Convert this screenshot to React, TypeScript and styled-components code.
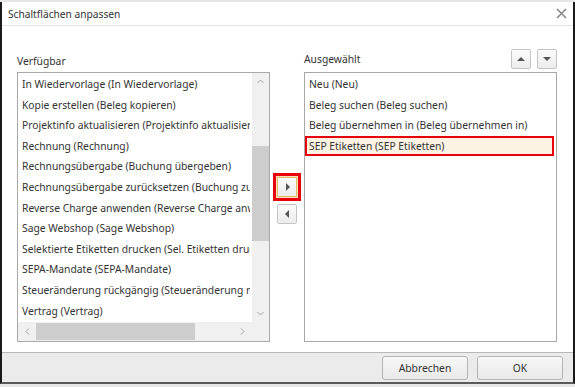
import styled, { createGlobalStyle } from "styled-components";

const GlobalStyle = createGlobalStyle`
  html, body {
    margin: 0;
    padding: 0;
    background: #e6e6e6;
    font-family: "Noto Sans", "Open Sans", sans-serif;
  }
`;

const Dialog = styled.div`
  margin-top: 2px;
  width: 575px;
  height: 382px;
  box-sizing: border-box;
  border-left: 2px solid #1a1a1a;
  border-right: 2px solid #1a1a1a;
  border-bottom: 2px solid #5a5a5a;
  background: #fff;
  display: flex;
  flex-direction: column;
`;

const Header = styled.div`
  height: 23px;
  display: flex;
  align-items: center;
  justify-content: space-between;
  padding: 0 6px 0 6px;
  border-bottom: 1px solid #e4e4e4;
  font-size: 10.2px;
  color: #333;
`;

const CloseIcon = styled.svg`
  width: 11px;
  height: 11px;
`;

const Body = styled.div`
  flex: 1;
  display: flex;
  padding: 19px 15px 0 15px;
`;

const Column = styled.div`
  width: 253px;
  display: flex;
  flex-direction: column;
`;

const ColumnHead = styled.div<{ $bottom?: boolean }>`
  height: 27px;
  display: flex;
  align-items: ${(p) => (p.$bottom ? "flex-end" : "center")};
  justify-content: space-between;
  padding-bottom: ${(p) => (p.$bottom ? "4px" : "0")};
  box-sizing: border-box;
  font-size: 10.3px;
  color: #333;
`;

const SortGroup = styled.div`
  display: flex;
  gap: 6px;
`;

const SmallButton = styled.button`
  width: 20px;
  height: 20px;
  padding: 0;
  display: flex;
  align-items: center;
  justify-content: center;
  border: 1px solid #c4c4c4;
  border-radius: 2px;
  background: linear-gradient(#fbfbfb, #ececec);
`;

const ListBox = styled.div`
  width: 100%;
  height: 270px;
  box-sizing: border-box;
  border: 1px solid #a9a9a9;
  position: relative;
  overflow: hidden;
  background: #fff;
`;

const Rows = styled.div`
  padding-top: 1px;
`;

const Row = styled.div<{ $selected?: boolean }>`
  height: 20.6px;
  line-height: 20.6px;
  padding-left: 4px;
  margin-right: 19px;
  white-space: nowrap;
  overflow: hidden;
  text-overflow: clip;
  font-size: 10.3px;
  color: #333;
  box-sizing: border-box;
  ${(p) =>
    p.$selected &&
    `
    background: #fdf3e5;
    border: 2px solid #e8000b;
    line-height: 17px;
    padding-left: 2px;
    margin-right: 2px;
  `}
`;

const VScroll = styled.div`
  position: absolute;
  top: 0;
  right: 0;
  width: 17px;
  bottom: 19px;
  background: #f0f0f0;
`;

const VThumb = styled.div`
  position: absolute;
  left: 0;
  right: 0;
  top: 73px;
  height: 95px;
  background: #cdcdcd;
`;

const HScroll = styled.div`
  position: absolute;
  left: 0;
  right: 0;
  bottom: 0;
  height: 19px;
  background: #f0f0f0;
`;

const HThumb = styled.div`
  position: absolute;
  top: 1px;
  bottom: 1px;
  left: 18px;
  width: 159px;
  background: #cdcdcd;
`;

const Arrow = styled.svg<{ $pos: string }>`
  position: absolute;
  ${(p) => p.$pos}
`;

const Middle = styled.div`
  width: 34px;
  display: flex;
  flex-direction: column;
  align-items: center;
  padding-top: 132px;
  gap: 7px;
`;

const MoveButton = styled.button<{ $marked?: boolean }>`
  width: 20px;
  height: 20px;
  padding: 0;
  display: flex;
  align-items: center;
  justify-content: center;
  border: 1px solid #c4c4c4;
  border-radius: 2px;
  background: linear-gradient(#fbfbfb, #ececec);
  ${(p) =>
    p.$marked &&
    `
    border-color: #e2b766;
    border-radius: 0;
    box-shadow: 0 0 0 1px #f6e3b8, 0 0 0 4px #e8000b;
  `}
`;

const Footer = styled.div`
  height: 29px;
  border-top: 1px solid #b8b8b8;
  background: #ebebeb;
  display: flex;
  justify-content: flex-end;
  align-items: center;
  gap: 9px;
  padding-right: 10px;
`;

const FooterButton = styled.button`
  width: 86px;
  height: 24px;
  border: 1px solid #b4b4b4;
  border-radius: 3px;
  background: linear-gradient(#f7f7f7, #e9e9e9);
  font-family: "Noto Sans", "Open Sans", sans-serif;
  font-size: 10.3px;
  color: #333;
`;

const Tri = ({ dir }: { dir: "up" | "down" | "left" | "right" }) => {
  const vertical = dir === "up" || dir === "down";
  const pts = {
    up: "1,6 5,2 9,6",
    down: "1,2 5,6 9,2",
    left: "6,1 2,5 6,9",
    right: "3,1 7,5 3,9",
  }[dir];
  return (
    <svg width={vertical ? 10 : 9} height={vertical ? 8 : 10} viewBox={vertical ? "0 0 10 8" : "0 0 9 10"}>
      <polygon points={pts} fill="#555" />
    </svg>
  );
};

const Chevron = ({ d, pos }: { d: string; pos: string }) => (
  <Arrow $pos={pos} width="9" height="9" viewBox="0 0 9 9">
    <path d={d} fill="none" stroke="#a6a6a6" strokeWidth="1" />
  </Arrow>
);

const available = [
  "In Wiedervorlage (In Wiedervorlage)",
  "Kopie erstellen (Beleg kopieren)",
  "Projektinfo aktualisieren (Projektinfo aktualisieren)",
  "Rechnung (Rechnung)",
  "Rechnungsübergabe (Buchung übergeben)",
  "Rechnungsübergabe zurücksetzen (Buchung zurücksetzen)",
  "Reverse Charge anwenden (Reverse Charge anwenden)",
  "Sage Webshop (Sage Webshop)",
  "Selektierte Etiketten drucken (Sel. Etiketten drucken)",
  "SEPA-Mandate (SEPA-Mandate)",
  "Steueränderung rückgängig (Steueränderung rückgängig)",
  "Vertrag (Vertrag)",
];

const selected = [
  "Neu (Neu)",
  "Beleg suchen (Beleg suchen)",
  "Beleg übernehmen in (Beleg übernehmen in)",
  "SEP Etiketten (SEP Etiketten)",
];

export default function App() {
  return (
    <>
      <GlobalStyle />
      <Dialog>
        <Header>
          <span>Schaltflächen anpassen</span>
          <CloseIcon viewBox="0 0 11 11">
            <path d="M1 1 L10 10 M10 1 L1 10" stroke="#8a8a8a" strokeWidth="1.6" />
          </CloseIcon>
        </Header>
        <Body>
          <Column>
            <ColumnHead $bottom>Verfügbar</ColumnHead>
            <ListBox>
              <Rows>
                {available.map((t) => (
                  <Row key={t}>{t}</Row>
                ))}
              </Rows>
              <VScroll>
                <VThumb />
                <Chevron d="M1.5 6 L4.5 3 L7.5 6" pos="top: 4px; left: 4px;" />
                <Chevron d="M1.5 3 L4.5 6 L7.5 3" pos="bottom: 4px; left: 4px;" />
              </VScroll>
              <HScroll>
                <HThumb />
                <Chevron d="M6 1.5 L3 4.5 L6 7.5" pos="top: 5px; left: 5px;" />
                <Chevron d="M3 1.5 L6 4.5 L3 7.5" pos="top: 5px; right: 22px;" />
              </HScroll>
            </ListBox>
          </Column>
          <Middle>
            <MoveButton $marked>
              <Tri dir="right" />
            </MoveButton>
            <MoveButton>
              <Tri dir="left" />
            </MoveButton>
          </Middle>
          <Column>
            <ColumnHead>
              <span>Ausgewählt</span>
              <SortGroup>
                <SmallButton>
                  <Tri dir="up" />
                </SmallButton>
                <SmallButton>
                  <Tri dir="down" />
                </SmallButton>
              </SortGroup>
            </ColumnHead>
            <ListBox>
              <Rows>
                {selected.map((t, i) => (
                  <Row key={t} $selected={i === 3}>
                    {t}
                  </Row>
                ))}
              </Rows>
            </ListBox>
          </Column>
        </Body>
        <Footer>
          <FooterButton>Abbrechen</FooterButton>
          <FooterButton>OK</FooterButton>
        </Footer>
      </Dialog>
    </>
  );
}
